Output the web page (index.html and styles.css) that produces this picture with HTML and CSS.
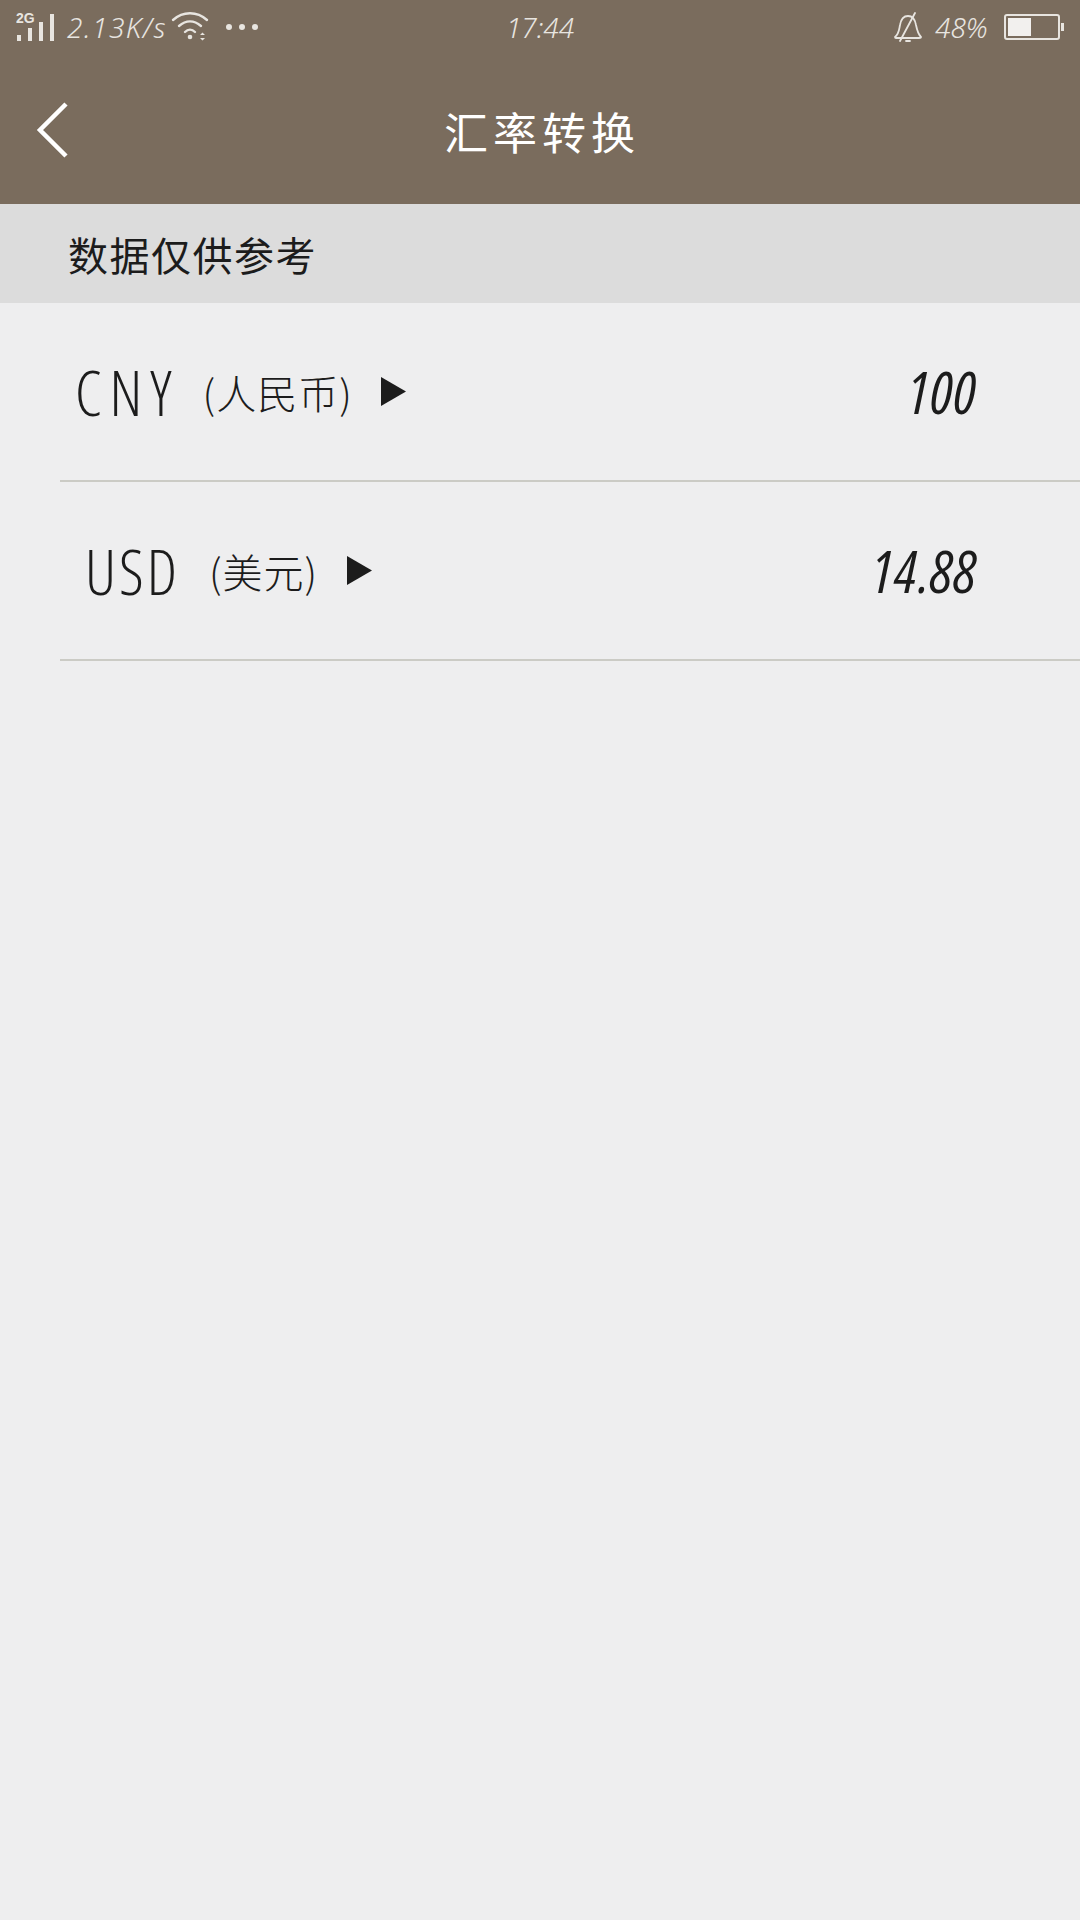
FILE: index.html
```html
<!DOCTYPE html>
<html lang="zh-CN">
<head>
  <meta charset="UTF-8">
  <meta name="viewport" content="width=device-width, initial-scale=1.0">
  <title>汇率转换</title>
  <link rel="stylesheet" href="styles.css">
</head>
<body>
  <div class="top">
    <div class="status-bar">
      <div class="status-left">
        <svg class="signal" width="40" height="32" viewBox="0 -4 40 32">
          <text x="0" y="9" class="signal-label">2G</text>
          <rect x="1" y="21" width="4" height="6"/>
          <rect x="12" y="14" width="4" height="13"/>
          <rect x="23" y="8" width="4" height="19"/>
          <rect x="34" y="0" width="4" height="27"/>
        </svg>
        <span class="speed">2.13K/s</span>
        <svg class="wifi" width="38" height="30" viewBox="0 0 38 30" fill="none" stroke="#e8e5e0" stroke-width="2.4" stroke-linecap="round">
          <path d="M2 9C12 0 26 0 36 9"/>
          <path d="M8 15C15 9 23 9 30 15"/>
          <path d="M14 21C17 18 21 18 24 21"/>
          <circle cx="19" cy="26" r="2.3" fill="#e8e5e0" stroke="none"/>
          <path d="M29 24h5l-2.500-2.500zM29 27h5l-2.500 2.500z" fill="#e8e5e0" stroke="none"/>
        </svg>
        <div class="dots"><i></i><i></i><i></i></div>
      </div>
      <span class="time">17:44</span>
      <div class="status-right">
        <svg class="bell" width="30" height="30" viewBox="0 0 30 30" fill="none" stroke="#e8e5e0" stroke-width="1.800" stroke-linecap="round" stroke-linejoin="round">
          <path d="M2 25C6 22 6 18 7 13C8 7 11 4 15 4C19 4 22 7 23 13C24 18 25 22 28 25C28 26 27 26 26 26H3C2 26 2 26 2 25Z"/>
          <path d="M22 1L7 29"/>
          <path d="M13 29h4"/>
        </svg>
        <span class="battery-text">48%</span>
        <div class="battery"><div class="battery-level" style="width: 48%"></div></div>
        <div class="battery-tip"></div>
      </div>
    </div>
    <div class="title-bar">
      <svg class="back" width="32" height="56" viewBox="0 0 32 56" fill="none" stroke="#fff" stroke-width="4.500">
        <path d="M30 2L4 28L30 54"/>
      </svg>
      <h1>汇率转换</h1>
    </div>
  </div>

  <div class="notice">数据仅供参考</div>

  <div class="rates">
    <div class="rate-row">
      <div class="currency cny">
        <span class="code">CNY</span>
        <span class="name">(人民币)</span>
        <svg class="arrow" width="25" height="29" viewBox="0 0 25 29"><path d="M0 0L25 14.500L0 29Z"/></svg>
      </div>
      <span class="amount">100</span>
    </div>
    <div class="rate-row">
      <div class="currency usd">
        <span class="code">USD</span>
        <span class="name">(美元)</span>
        <svg class="arrow" width="25" height="29" viewBox="0 0 25 29"><path d="M0 0L25 14.500L0 29Z"/></svg>
      </div>
      <span class="amount">14.88</span>
    </div>
  </div>
</body>
</html>
```

FILE: styles.css
```css
* {
  box-sizing: border-box;
}

html, body {
  height: 100%;
}

body {
  margin: 0;
  background: #eeeeef;
  color: #1c1c1c;
  font-family: "Noto Sans CJK SC", "Noto Sans", sans-serif;
  font-weight: 300;
  overflow: hidden;
}

.top {
  background: #7a6c5d;
  height: 204px;
}

.status-bar {
  height: 58px;
  display: grid;
  grid-template-columns: 1fr auto 1fr;
  align-items: center;
  padding: 0 16px 0 16px;
  color: #e8e5e0;
}

.status-left {
  display: flex;
  align-items: center;
}

.signal {
  fill: #e8e5e0;
  margin-top: -6px;
}

.signal-label {
  font-family: "Liberation Sans", sans-serif;
  font-size: 14px;
  font-weight: 700;
}

.speed {
  font-family: "Noto Sans", sans-serif;
  font-weight: 300;
  font-style: italic;
  font-size: 28px;
  line-height: 32px;
  letter-spacing: 1.500px;
  margin-left: 11px;
  width: 104px;
  margin-top: -4px;
}

.wifi {
  margin-top: -6px;
}

.dots {
  display: flex;
  gap: 7px;
  margin-left: 17px;
  margin-top: -5px;
}

.dots i {
  width: 6px;
  height: 6px;
  border-radius: 50%;
  background: #e8e5e0;
}

.time {
  font-family: "Noto Sans", sans-serif;
  font-weight: 300;
  font-style: italic;
  font-size: 28px;
  line-height: 32px;
  margin-top: -4px;
}

.status-right {
  display: flex;
  align-items: center;
  justify-content: flex-end;
  margin-top: -4px;
}

.battery-text {
  font-family: "Noto Sans", sans-serif;
  font-weight: 300;
  font-style: italic;
  font-size: 28px;
  line-height: 32px;
  margin-left: 12px;
  width: 52px;
}

.battery {
  width: 56px;
  height: 26px;
  margin-left: 17px;
  padding: 2px;
  border: 2px solid #e8e5e0;
  border-radius: 3px;
}

.battery-level {
  height: 100%;
  background: #f2f0ee;
}

.battery-tip {
  width: 3px;
  height: 8px;
  margin-left: 1px;
  background: #e8e5e0;
}

.title-bar {
  display: flex;
  justify-content: center;
  align-items: center;
  position: relative;
  height: 146px;
}

.back {
  position: absolute;
  left: 36px;
  top: 44px;
}

.title-bar h1 {
  margin: 0;
  padding-left: 4px;
  color: #fff;
  font-size: 44px;
  font-weight: 400;
  line-height: 60px;
  letter-spacing: 5px;
}

.notice {
  height: 99px;
  display: flex;
  align-items: center;
  padding-left: 68px;
  background: #dcdcdc;
  font-size: 40px;
  font-weight: 400;
  letter-spacing: 1.500px;
}

.rates {
  padding-left: 60px;
}

.rate-row {
  height: 179px;
  display: flex;
  justify-content: space-between;
  align-items: center;
  padding-right: 103px;
  border-bottom: 2px solid #cbcbc5;
}

.currency {
  display: flex;
  align-items: center;
}

.code {
  font-family: "Open Sans", sans-serif;
  font-stretch: 75%;
  font-weight: 300;
  font-size: 62px;
  line-height: 70px;
}

.name {
  font-size: 40px;
  line-height: 70px;
  letter-spacing: 1px;
}

.arrow {
  fill: #1c1c1c;
}

.cny {
  padding-left: 15px;
}

.cny .code {
  letter-spacing: 8px;
}

.cny .name {
  margin-left: 23px;
}

.cny .arrow {
  margin-left: 28px;
}

.usd {
  padding-left: 25px;
}

.usd .code {
  letter-spacing: 3px;
}

.usd .name {
  margin-left: 29px;
}

.usd .arrow {
  margin-left: 29px;
}

.amount {
  font-family: "Open Sans", sans-serif;
  font-stretch: 75%;
  font-style: italic;
  font-weight: 400;
  font-size: 58px;
  line-height: 70px;
  letter-spacing: 1px;
}
```
